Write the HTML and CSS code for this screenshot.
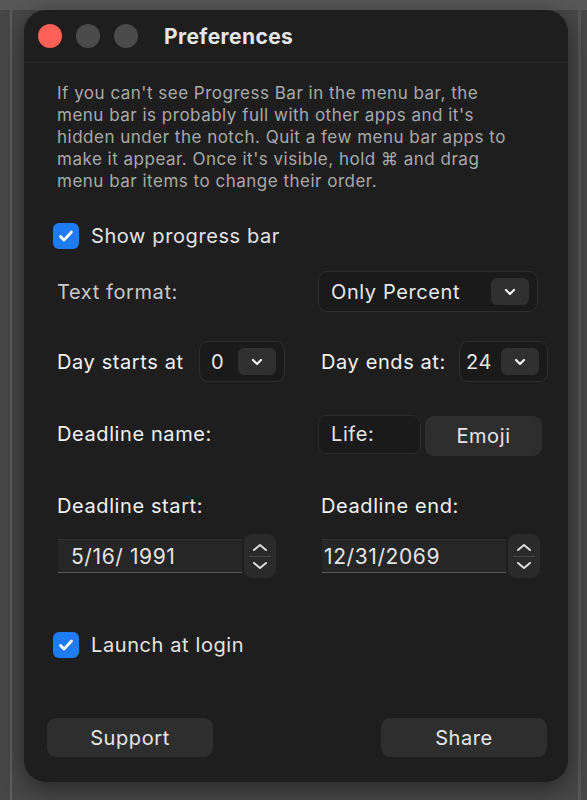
FILE: index.html
```html
<!DOCTYPE html>
<html lang="en">
<head>
    <meta charset="UTF-8">
    <meta name="viewport" content="width=device-width, initial-scale=1.0">
    <title>Preferences</title>
    <link rel="stylesheet" href="styles.css">
</head>
<body>
    <div class="backdrop">
        <div class="window">
            <div class="titlebar">
                <span class="light light-close"></span>
                <span class="light"></span>
                <span class="light"></span>
                <span class="title">Preferences</span>
            </div>

            <div class="content">
                <p class="note">If you can't see Progress Bar in the menu bar, the<br>menu bar is probably full with other apps and it's<br>hidden under the notch. Quit a few menu bar apps to<br>make it appear. Once it's visible, hold &#8984; and drag<br>menu bar items to change their order.</p>

                <label class="check-row check-top">
                    <span class="checkbox">
                        <svg width="18" height="18" viewBox="0 0 18 18"><path d="M3.5 9.5l3.5 3.6L14.5 5" fill="none" stroke="#fff" stroke-width="2.8" stroke-linecap="round" stroke-linejoin="round"/></svg>
                    </span>
                    Show progress bar
                </label>

                <div class="row row-format">
                    <span class="label label-dim">Text format:</span>
                    <div class="select select-wide">
                        <span class="select-value">Only Percent</span>
                        <span class="chevron-btn">
                            <svg width="12" height="8" viewBox="0 0 12 8"><path d="M2 2l4 4 4-4" fill="none" stroke="#eee" stroke-width="2.2" stroke-linecap="round" stroke-linejoin="round"/></svg>
                        </span>
                    </div>
                </div>

                <div class="row row-day">
                    <div class="cell">
                        <span class="label label-start">Day starts at</span>
                        <div class="select select-small">
                            <span class="select-value">0</span>
                            <span class="chevron-btn">
                                <svg width="12" height="8" viewBox="0 0 12 8"><path d="M2 2l4 4 4-4" fill="none" stroke="#eee" stroke-width="2.2" stroke-linecap="round" stroke-linejoin="round"/></svg>
                            </span>
                        </div>
                    </div>
                    <div class="cell cell-right">
                        <span class="label label-ends">Day ends at:</span>
                        <div class="select select-small select-end">
                            <span class="select-value">24</span>
                            <span class="chevron-btn">
                                <svg width="12" height="8" viewBox="0 0 12 8"><path d="M2 2l4 4 4-4" fill="none" stroke="#eee" stroke-width="2.2" stroke-linecap="round" stroke-linejoin="round"/></svg>
                            </span>
                        </div>
                    </div>
                </div>

                <div class="row row-name">
                    <span class="label">Deadline name:</span>
                    <div class="cell">
                        <div class="text-field">Life:</div>
                        <button class="btn btn-emoji">Emoji</button>
                    </div>
                </div>

                <div class="row row-labels">
                    <span class="label">Deadline start:</span>
                    <span class="label label-end">Deadline end:</span>
                </div>

                <div class="row row-dates">
                    <div class="cell">
                        <div class="date-field date-start">5/16/ 1991</div>
                        <div class="stepper">
                            <svg width="20" height="12" viewBox="0 0 20 12"><path d="M4 9l6-5 6 5" fill="none" stroke="#ddd" stroke-width="2" stroke-linecap="round" stroke-linejoin="round"/></svg>
                            <span class="stepper-line"></span>
                            <svg width="20" height="12" viewBox="0 0 20 12"><path d="M4 3l6 5 6-5" fill="none" stroke="#ddd" stroke-width="2" stroke-linecap="round" stroke-linejoin="round"/></svg>
                        </div>
                    </div>
                    <div class="cell cell-date-end">
                        <div class="date-field date-end">12/31/2069</div>
                        <div class="stepper">
                            <svg width="20" height="12" viewBox="0 0 20 12"><path d="M4 9l6-5 6 5" fill="none" stroke="#ddd" stroke-width="2" stroke-linecap="round" stroke-linejoin="round"/></svg>
                            <span class="stepper-line"></span>
                            <svg width="20" height="12" viewBox="0 0 20 12"><path d="M4 3l6 5 6-5" fill="none" stroke="#ddd" stroke-width="2" stroke-linecap="round" stroke-linejoin="round"/></svg>
                        </div>
                    </div>
                </div>

                <label class="check-row check-launch">
                    <span class="checkbox">
                        <svg width="18" height="18" viewBox="0 0 18 18"><path d="M3.5 9.5l3.5 3.6L14.5 5" fill="none" stroke="#fff" stroke-width="2.8" stroke-linecap="round" stroke-linejoin="round"/></svg>
                    </span>
                    Launch at login
                </label>

                <div class="footer">
                    <button class="btn btn-footer">Support</button>
                    <button class="btn btn-footer">Share</button>
                </div>
            </div>
        </div>
    </div>
</body>
</html>
```

FILE: styles.css
```css
body {
    margin: 0;
    padding: 0;
    background-color: #474747;
    font-family: 'Inter', 'Noto Sans', sans-serif;
    color: #e8e8e8;
    letter-spacing: 0.6px;
}

.backdrop {
    min-height: 800px;
    box-sizing: border-box;
    border-top: 10px solid #585858;
    background:
        linear-gradient(90deg, transparent 10px, #5e5e5e 10px, #5e5e5e 12px, transparent 12px),
        linear-gradient(90deg, transparent 578px, #555 578px, #555 581px, transparent 581px);
    padding-left: 24px;
}

.window {
    width: 544px;
    height: 772px;
    background: #1e1e1e;
    border-radius: 22px;
    box-shadow: 0px 6px 24px rgba(0, 0, 0, 0.45);
    overflow: hidden;
}

.titlebar {
    height: 52px;
    display: flex;
    align-items: center;
    padding-left: 14px;
    border-bottom: 1px solid #2c2c2c;
}

.light {
    width: 24px;
    height: 24px;
    border-radius: 50%;
    background: #4b4b4b;
    margin-right: 14px;
}

.light-close {
    background: #fe5f57;
}

.title {
    margin-left: 12px;
    font-size: 21px;
    font-weight: 700;
    letter-spacing: 0.4px;
    color: #e6e6e6;
}

.content {
    padding: 19px 26px 0 33px;
}

.note {
    margin: 0;
    font-size: 17px;
    line-height: 22px;
    letter-spacing: 0.5px;
    color: #a9a9a9;
    white-space: nowrap;
}

.check-row {
    display: flex;
    align-items: center;
    font-size: 20px;
    color: #e4e4e4;
    margin-left: -4px;
}

.check-top {
    margin-top: 31px;
}

.check-launch {
    margin-top: 54px;
}

.checkbox {
    width: 26px;
    height: 26px;
    border-radius: 6px;
    background: #1f7bf2;
    display: flex;
    align-items: center;
    justify-content: center;
    margin-right: 12px;
}

.row {
    display: grid;
    grid-template-columns: 261px 1fr;
    align-items: center;
}

.cell {
    display: flex;
    align-items: center;
}

.label {
    font-size: 20px;
    color: #f2f2f2;
}

.label-dim {
    color: #c9c9c9;
}

.label-start {
    width: 142px;
    flex-shrink: 0;
}

.label-ends {
    width: 138px;
    flex-shrink: 0;
}

.label-end {
    padding-left: 3px;
}

.row-format {
    margin-top: 22px;
}

.row-day {
    margin-top: 29px;
}

.row-name {
    margin-top: 30px;
}

.row-labels {
    margin-top: 38px;
}

.row-dates {
    margin-top: 16px;
}

.select {
    display: flex;
    align-items: center;
    justify-content: space-between;
    box-sizing: border-box;
    height: 41px;
    border: 1px solid #2e2e2e;
    border-radius: 9px;
    background: #1a1a1a;
    padding: 0 8px 0 12px;
}

.select-wide {
    width: 220px;
}

.select-small {
    width: 86px;
    padding-left: 11px;
}

.cell-right {
    padding-left: 3px;
}

.select-end {
    width: 89px;
    padding-left: 6px;
}

.select-value {
    font-size: 20px;
    color: #e8e8e8;
}

.chevron-btn {
    width: 38px;
    height: 27px;
    border-radius: 6px;
    background: #303030;
    display: flex;
    align-items: center;
    justify-content: center;
}

.text-field {
    box-sizing: border-box;
    width: 103px;
    height: 39px;
    border: 1px solid #2c2c2c;
    border-radius: 8px;
    background: #1a1a1a;
    padding-left: 12px;
    font-size: 20px;
    color: #e4e4e4;
    display: flex;
    align-items: center;
}

.btn {
    font-family: inherit;
    letter-spacing: 0.6px;
    border: none;
    background: #2e2e2e;
    color: #e6e6e6;
    font-size: 20px;
    border-radius: 9px;
    cursor: pointer;
}

.btn-emoji {
    width: 117px;
    height: 40px;
    margin-left: 4px;
    margin-top: 4px;
}

.date-field {
    box-sizing: border-box;
    width: 184px;
    height: 34px;
    background: #262626;
    border-top: 1px solid #323232;
    border-bottom: 1px solid #5a5a5a;
    font-size: 21px;
    color: #e4e4e4;
    display: flex;
    align-items: center;
}

.date-start {
    margin-left: 1px;
    padding-left: 13px;
}

.cell-date-end {
    padding-left: 4px;
}

.date-end {
    padding-left: 2px;
}

.stepper {
    width: 32px;
    height: 44px;
    margin-left: 2px;
    border-radius: 8px;
    background: #2a2a2a;
    display: flex;
    flex-direction: column;
    align-items: center;
    justify-content: center;
}

.stepper-line {
    width: 22px;
    height: 1px;
    background: #444;
    margin: 3px 0;
}

.footer {
    display: flex;
    justify-content: space-between;
    margin-top: 60px;
    margin-left: -10px;
    margin-right: -5px;
}

.btn-footer {
    width: 166px;
    height: 39px;
}
```
